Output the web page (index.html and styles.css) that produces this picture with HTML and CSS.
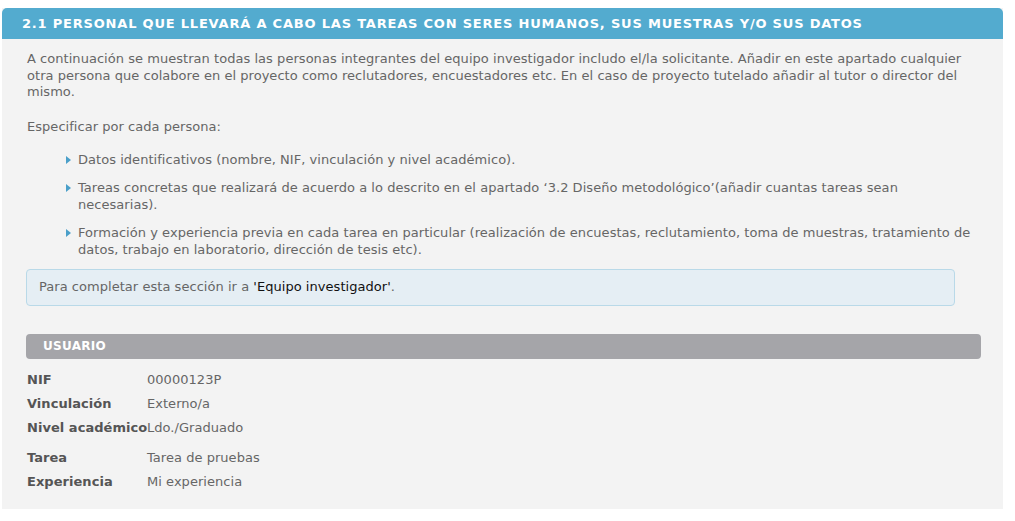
FILE: index.html
```html
<!DOCTYPE html>
<html lang="es">
<head>
<meta charset="utf-8">
<link rel="stylesheet" href="styles.css">
</head>
<body>
<div class="page">
  <section class="panel">
    <h2 class="panel-title">2.1 PERSONAL QUE LLEVARÁ A CABO LAS TAREAS CON SERES HUMANOS, SUS MUESTRAS Y/O SUS DATOS</h2>
    <div class="panel-body">
      <p class="intro">A continuación se muestran todas las personas integrantes del equipo investigador includo el/la solicitante. Añadir en este apartado cualquier otra persona que colabore en el proyecto como reclutadores, encuestadores etc. En el caso de proyecto tutelado añadir al tutor o director del mismo.</p>
      <p class="lead">Especificar por cada persona:</p>
      <ul class="bullets">
        <li>Datos identificativos (nombre, NIF, vinculación y nivel académico).</li>
        <li>Tareas concretas que realizará de acuerdo a lo descrito en el apartado ‘3.2 Diseño metodológico’(añadir cuantas tareas sean necesarias).</li>
        <li>Formación y experiencia previa en cada tarea en particular (realización de encuestas, reclutamiento, toma de muestras, tratamiento de datos, trabajo en laboratorio, dirección de tesis etc).</li>
      </ul>
      <div class="notice">Para completar esta sección ir a <span class="notice-link">'Equipo investigador'</span>.</div>

      <div class="user">
        <div class="user-bar">USUARIO</div>
        <dl class="fields">
          <div class="row"><dt>NIF</dt><dd>00000123P</dd></div>
          <div class="row"><dt>Vinculación</dt><dd>Externo/a</dd></div>
          <div class="row"><dt>Nivel académico</dt><dd>Ldo./Graduado</dd></div>
        </dl>
        <dl class="fields tasks">
          <div class="row"><dt>Tarea</dt><dd>Tarea de pruebas</dd></div>
          <div class="row"><dt>Experiencia</dt><dd>Mi experiencia</dd></div>
        </dl>
      </div>
    </div>
  </section>
</div>
</body>
</html>
```

FILE: styles.css
```css
* { box-sizing: border-box; }
html, body { margin: 0; padding: 0; background: #ffffff; }
body {
  font-family: "DejaVu Sans", "Liberation Sans", sans-serif;
  font-size: 13px;
  color: #666666;
}
.page {
  padding: 8px 12px 14px 2px;
}
.panel {
  width: 1001px;
  background: #f3f3f3;
}
.panel-title {
  margin: 0;
  height: 31px;
  line-height: 31px;
  padding: 0 0 0 20px;
  background: #53abcf;
  color: #ffffff;
  font-size: 13px;
  font-weight: bold;
  letter-spacing: 0.8px;
  border-radius: 5px 5px 0 0;
}
.panel-body {
  padding: 12px 22px 15px 24px;
  letter-spacing: 0.04px;
}
.intro {
  margin: 0 0 18px 0;
  padding-left: 1px;
  line-height: 16.5px;
}
.lead {
  margin: 0 0 16px 0;
  padding-left: 1px;
  line-height: 16.5px;
}
.bullets {
  list-style: none;
  margin: 0;
  padding: 0 4px 0 38px;
}
.bullets li {
  position: relative;
  padding-left: 14px;
  line-height: 17px;
  margin-bottom: 11px;
}
.bullets li::before {
  content: "";
  position: absolute;
  left: 2px;
  top: 5px;
  width: 0;
  height: 0;
  border-top: 4px solid transparent;
  border-bottom: 4px solid transparent;
  border-left: 5px solid #4a9fc9;
}
.notice {
  width: 929px;
  background: #e5eef4;
  border: 1px solid #b9d9e8;
  border-radius: 4px;
  padding: 9px 12px;
  line-height: 16.5px;
}
.notice-link { color: #111111; }
.user { margin-top: 28px; }
.user-bar {
  height: 25px;
  line-height: 25px;
  background: #a5a5a9;
  color: #ffffff;
  font-size: 12px;
  font-weight: bold;
  padding-left: 17px;
  border-radius: 4px;
  letter-spacing: 0.3px;
}
.fields {
  margin: 9px 0 0 0;
  padding-left: 1px;
}
.fields.tasks { margin-top: 6px; }
.row {
  display: flex;
  height: 24px;
  line-height: 24px;
}
.row dt {
  width: 120px;
  flex: none;
  font-weight: bold;
  color: #555555;
  white-space: nowrap;
}
.row dd {
  margin: 0;
  color: #666666;
}
```
